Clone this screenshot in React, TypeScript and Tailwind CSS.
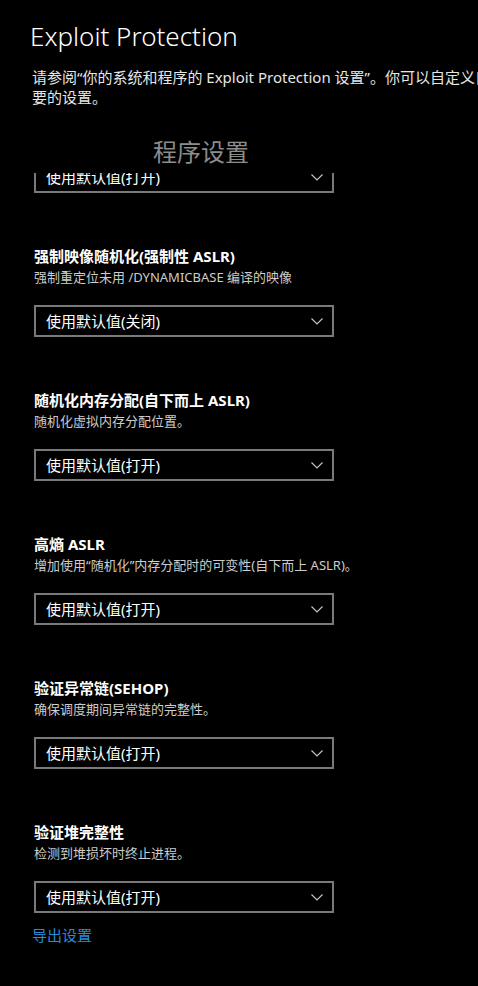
const font = { fontFamily: '"Noto Sans", "Noto Sans CJK SC", sans-serif' };

interface Mitigation {
  title: string;
  desc: string;
  value: string;
}

const mitigations: Mitigation[] = [
  { title: '强制映像随机化(强制性 ASLR)', desc: '强制重定位未用 /DYNAMICBASE 编译的映像', value: '使用默认值(关闭)' },
  { title: '随机化内存分配(自下而上 ASLR)', desc: '随机化虚拟内存分配位置。', value: '使用默认值(打开)' },
  { title: '高熵 ASLR', desc: '增加使用“随机化”内存分配时的可变性(自下而上 ASLR)。', value: '使用默认值(打开)' },
  { title: '验证异常链(SEHOP)', desc: '确保调度期间异常链的完整性。', value: '使用默认值(打开)' },
  { title: '验证堆完整性', desc: '检测到堆损坏时终止进程。', value: '使用默认值(打开)' },
];

function Chevron() {
  return (
    <svg width="12" height="7" viewBox="0 0 12 7" fill="none" className="text-[#c8c8c8]">
      <polyline points="0.5,0.5 6,6 11.5,0.5" stroke="currentColor" strokeWidth="1.1" />
    </svg>
  );
}

function Select({ value }: { value: string }) {
  return (
    <div className="flex h-[32px] w-[300px] items-center justify-between border-2 border-[#7a7a7a] pl-[10px] pr-[9px]">
      <span className="text-[15px] leading-[20px] text-white">{value}</span>
      <Chevron />
    </div>
  );
}

function App() {
  return (
    <div className="h-[986px] w-[478px] overflow-hidden bg-black text-white" style={font}>
      <h1 className="ml-[30px] mt-[18px] whitespace-nowrap text-[26px] font-light leading-[36px]">
        Exploit Protection
      </h1>
      <p className="ml-[32px] mt-[13px] text-[15px] leading-[20px] text-[#e6e6e6]">
        <span className="block whitespace-nowrap">
          请参阅“你的系统和程序的 Exploit Protection 设置”。你可以自定义自己需
        </span>
        <span className="block whitespace-nowrap">要的设置。</span>
      </p>
      <h2 className="ml-[153px] mt-[29px] text-[24px] leading-[32px] text-[#8c8c8c]">程序设置</h2>

      <div className="mt-[5px] h-[813px] overflow-hidden">
        <div className="-mt-[12px] pl-[34px]">
          <Select value="使用默认值(打开)" />
          {mitigations.map((m) => (
            <div key={m.title} className="mt-[53px]">
              <h3 className="text-[15px] font-bold leading-[20px] text-white">{m.title}</h3>
              <p className="mt-[2px] text-[13px] leading-[18px] text-[#cccccc]">{m.desc}</p>
              <div className="mt-[19px]">
                <Select value={m.value} />
              </div>
            </div>
          ))}
          <a className="-ml-[2px] mt-[12px] block text-[15px] leading-[20px] text-[#2a8ad9]">导出设置</a>
        </div>
      </div>
    </div>
  );
}

export default App;
